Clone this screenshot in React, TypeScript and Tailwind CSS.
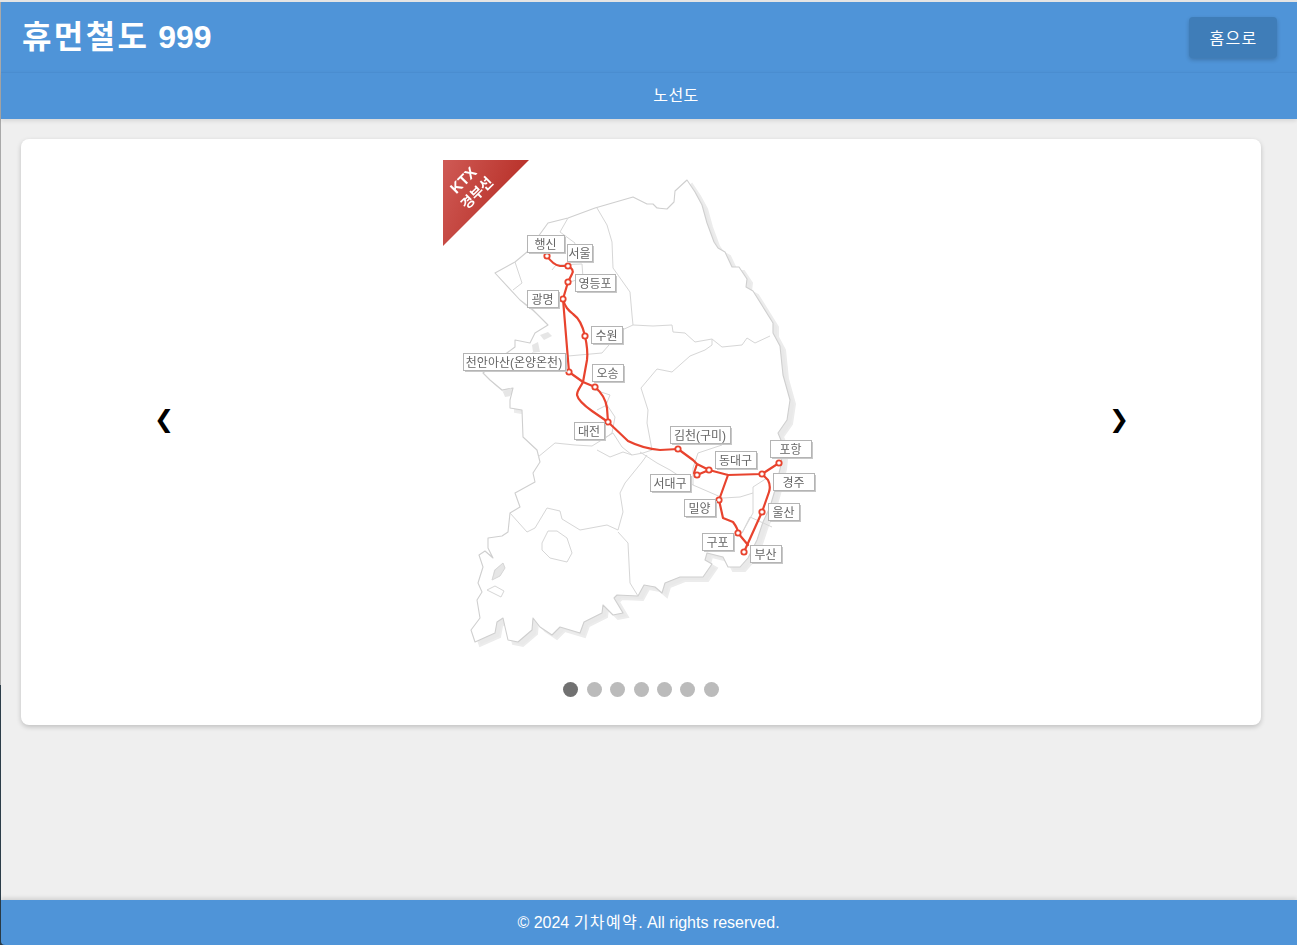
const FONT = "font-['Liberation_Sans','Noto_Sans_CJK_KR',sans-serif]";

const COAST =
  "M687 180 L695 192 L702 205 L707 223 L714 242 L718 248 L725 252 L732 267 L739 267 L747 279 L746 287 L753 291 L773 323 L773 333 L780 346 L783 375 L790 400 L787 420 L778 433 L783 445 L781 465 L775 490 L770 507 L763 522 L757 540 L748 558 L740 567 L728 567 L723 557 L707 553 L705 560 L712 564 L703 577 L680 577 L665 583 L662 593 L655 587 L644 585 L638 596 L617 595 L614 598 L623 613 L613 615 L603 605 L602 613 L584 622 L580 633 L560 627 L552 635 L540 627 L533 618 L532 630 L518 642 L508 640 L505 627 L503 618 L497 622 L495 633 L475 642 L471 630 L480 618 L477 600 L482 592 L478 583 L483 567 L479 555 L485 551 L493 558 L488 548 L488 538 L502 536 L508 532 L510 513 L520 507 L515 493 L535 482 L533 473 L540 462 L537 450 L523 437 L522 410 L510 408 L510 400 L513 388 L502 390 L490 380 L483 373 L500 358 L515 347 L515 340 L530 343 L535 333 L548 325 L533 310 L520 300 L495 273 L515 262 L527 252 L548 223 L568 218 L595 208 L633 197 L647 204 L653 204 L657 208 L667 209 L674 202 L675 191 Z";

const BORDERS = [
  "M597 208 L607 225 L612 242 L613 268 L630 292 L632 315 L633 325 L622 330 L602 353 L568 356 L532 353",
  "M633 325 L653 326 L672 325 L673 332 L685 333 L695 342 L712 339 L722 347 L742 345 L747 338 L755 343 L770 336",
  "M712 339 L712 345 L705 350 L690 356 L672 372 L657 369 L641 388 L648 410 L647 423 L652 450 L643 453 L632 455 L622 447 L613 433 L592 446 L575 445 L555 443 L538 457",
  "M597 410 L607 405 L615 417 L612 433 L605 438",
  "M597 450 L610 457 L623 452 L632 455",
  "M640 452 L657 463 L670 470 L693 485 L723 498 L740 497 L753 493 L753 513 L742 533 L750 517 L772 527",
  "M722 445 L698 453 L693 468 L693 485",
  "M753 493 L753 487 L767 478",
  "M647 455 L642 462 L625 483 L620 493 L623 512 L618 530 L607 525 L580 530 L562 519 L560 511 L547 508 L535 528 L527 532 L510 513",
  "M618 532 L628 543 L630 583 L638 596",
  "M542 543 L548 531 L557 531 L567 538 L572 553 L567 562 L550 558 L542 550 Z",
  "M515 262 L522 283 L513 290",
  "M552 270 L556 265 L582 264 L583 278 L570 282",
  "M568 218 L560 232 L575 243 L570 262 M595 390 L610 395 L606 405",
  "M487 590 L495 586 L504 591 L501 597 L491 592 Z",
  "M492 580 L500 576 L505 568 L503 563 L495 570 Z",
];

// grey patches inside the bays on the west coast
const BAY_SHADES = [
  "M540 335 L548 332 L552 336 L544 340 Z",
  "M532 345 L538 342 L540 352 L533 352 Z",
  "M503 392 L511 388 L511 396 L505 397 Z",
  "M494 570 L503 563 L505 568 L500 576 L492 580 Z",
];

const ROUTES = [
  "M547 256 C551 262 555 265 560 266 L568 266 C572 268 574 271 572 274 L568 282 L563 299",
  "M563 299 L569 372 L583 382 L595 387 C602 393 606 400 607 408 L608 422",
  "M563 299 C565 307 568 310 573 314 C580 319 583 327 585 336 C587 345 588 352 587 360 L583 382 C580 388 577 390 577 395 C578 400 585 406 592 411 L608 422 L628 441 C638 446 648 449 660 450 L678 449 L693 460 L697 464 L694 473 L697 475 L709 470 L697 464",
  "M709 470 L728 475 L762 474 L779 463",
  "M762 474 L768 480 C770 484 770 489 769 492 L762 512 L744 552",
  "M728 475 L719 500 L723 518 L733 522 C736 526 738 529 738 533 L748 545",
];

const STOPS: [number, number][] = [
  [547, 256], [568, 266], [568, 282], [563, 299], [585, 336], [569, 372], [595, 387],
  [608, 422], [678, 449], [697, 475], [709, 470], [779, 463], [762, 474], [719, 500],
  [762, 512], [738, 533], [744, 552],
];

const LABELS: { text: string; x: number; y: number; w: number }[] = [
  { text: "행신", x: 527, y: 235, w: 37 },
  { text: "서울", x: 567, y: 244, w: 25 },
  { text: "영등포", x: 575, y: 274, w: 40 },
  { text: "광명", x: 527, y: 290, w: 31 },
  { text: "수원", x: 591, y: 326, w: 31 },
  { text: "천안아산(온양온천)", x: 463, y: 353, w: 102 },
  { text: "오송", x: 592, y: 364, w: 31 },
  { text: "대전", x: 574, y: 422, w: 30 },
  { text: "김천(구미)", x: 670, y: 426, w: 60 },
  { text: "포항", x: 770, y: 440, w: 41 },
  { text: "동대구", x: 715, y: 451, w: 41 },
  { text: "서대구", x: 650, y: 474, w: 40 },
  { text: "경주", x: 773, y: 473, w: 41 },
  { text: "밀양", x: 684, y: 499, w: 31 },
  { text: "울산", x: 768, y: 503, w: 31 },
  { text: "구포", x: 702, y: 533, w: 31 },
  { text: "부산", x: 750, y: 545, w: 31 },
];

function RouteMap() {
  return (
    <svg width="396" height="500" viewBox="443 160 396 500" className="block blur-[0.4px]">
      <defs>
        <linearGradient id="ribbon" x1="0" y1="0" x2="1" y2="0.4">
          <stop offset="0" stopColor="#cf5a55" />
          <stop offset="1" stopColor="#b62d25" />
        </linearGradient>
      </defs>

      {/* land, with its drop shadow */}
      <path d={COAST} transform="translate(5 4)" fill="#e9e9e9" stroke="#ececec" strokeWidth="2" />
      <path d={COAST} fill="#fff" stroke="#cfcfcf" strokeWidth="1.1" strokeLinejoin="round" />
      {BAY_SHADES.map((d) => (
        <path key={d} d={d} fill="#e6e6e6" />
      ))}
      <g fill="none" stroke="#d6d6d6" strokeWidth="1" strokeLinejoin="round">
        {BORDERS.map((d) => (
          <path key={d} d={d} />
        ))}
      </g>

      {/* ribbon */}
      <path d="M443 160 H529 L443 246 Z" fill="url(#ribbon)" />
      <text
        x="463"
        y="180"
        transform="rotate(-45 463 180)"
        textAnchor="middle"
        dominantBaseline="central"
        fill="#fff"
        fontSize="15"
        fontWeight="700"
      >
        KTX
      </text>
      <text
        x="477"
        y="193"
        transform="rotate(-45 477 193)"
        textAnchor="middle"
        dominantBaseline="central"
        fill="#fff"
        fontSize="14"
        fontWeight="700"
      >
        경부선
      </text>

      {/* routes */}
      <g fill="none" stroke="#e8432e" strokeWidth="2.2" strokeLinejoin="round" strokeLinecap="round">
        {ROUTES.map((d) => (
          <path key={d} d={d} />
        ))}
      </g>
      {STOPS.map(([cx, cy]) => (
        <circle key={`${cx}-${cy}`} cx={cx} cy={cy} r="2.7" fill="#fff" stroke="#e8432e" strokeWidth="1.8" />
      ))}

      {/* station labels */}
      {LABELS.map((l) => (
        <g key={l.text}>
          <rect x={l.x + 2} y={l.y + 2} width={l.w} height={17} fill="#c8c8c8" />
          <rect x={l.x + 0.5} y={l.y + 0.5} width={l.w} height={17} fill="#fff" stroke="#b4b4b4" />
          <text
            x={l.x + l.w / 2}
            y={l.y + 9.5}
            textAnchor="middle"
            dominantBaseline="central"
            fill="#666"
            fontSize="12"
          >
            {l.text}
          </text>
        </g>
      ))}
    </svg>
  );
}

export default function App() {
  return (
    <div
      className={`${FONT} flex min-h-[945px] flex-col bg-[linear-gradient(to_bottom,#e4e4e4_2px,#a9a9a9_2px,#a9a9a9_685px,#2c3d49_685px)] pt-[2px] pl-[1px] text-white`}
    >
      {/* Header */}
      <header className="flex h-[70px] items-start justify-between bg-[#4f94d8] pt-[15px] pr-[20px] pl-[21px]">
        <h1 className="mt-[2px] text-[32px] leading-[37px] font-bold">
          <span className="tracking-[2.4px]">휴먼철도</span> 999
        </h1>
        <button className="h-[41px] w-[88px] rounded bg-[#3f7db8] pt-[2px] pl-[1px] text-base tracking-[1.2px] text-white shadow-[0_2px_4px_rgba(0,0,0,0.2)]">
          홈으로
        </button>
      </header>

      {/* Nav */}
      <nav className="relative z-10 flex h-[47px] items-center justify-center border-t border-[#4a8dd0] bg-[#4f94d8] pl-[54px] text-base tracking-[0.5px] shadow-[0_2px_4px_rgba(0,0,0,0.1)]">
        노선도
      </nav>

      {/* Content */}
      <main className="flex-1 bg-[#efefef] px-[20px] pt-[20px]">
        <div className="relative h-[586px] w-[1240px] rounded-lg bg-white pt-[21px] shadow-[0_2px_5px_rgba(0,0,0,0.2)]">
          <div className="flex justify-center">
            <RouteMap />
          </div>
          <span className="absolute top-[264px] left-[133px] font-['DejaVu_Sans',sans-serif] text-[24px] leading-[32px] font-bold text-black">
            ❮
          </span>
          <span className="absolute top-[264px] left-[1088px] font-['DejaVu_Sans',sans-serif] text-[24px] leading-[32px] font-bold text-black">
            ❯
          </span>
          <div className="mt-[22px] flex justify-center gap-[8.4px]">
            <span className="h-[15px] w-[15px] rounded-full bg-[#717171]" />
            <span className="h-[15px] w-[15px] rounded-full bg-[#bbbbbb]" />
            <span className="h-[15px] w-[15px] rounded-full bg-[#bbbbbb]" />
            <span className="h-[15px] w-[15px] rounded-full bg-[#bbbbbb]" />
            <span className="h-[15px] w-[15px] rounded-full bg-[#bbbbbb]" />
            <span className="h-[15px] w-[15px] rounded-full bg-[#bbbbbb]" />
            <span className="h-[15px] w-[15px] rounded-full bg-[#bbbbbb]" />
          </div>
        </div>
      </main>

      {/* Footer */}
      <footer className="flex h-[45px] items-center justify-center rounded-bl bg-[#4f94d8] pr-[1px] text-base shadow-[0_-2px_4px_rgba(0,0,0,0.12)]">
        <span>
          © 2024 <span className="tracking-[1.4px]">기차예약</span>. All rights reserved.
        </span>
      </footer>
    </div>
  );
}
